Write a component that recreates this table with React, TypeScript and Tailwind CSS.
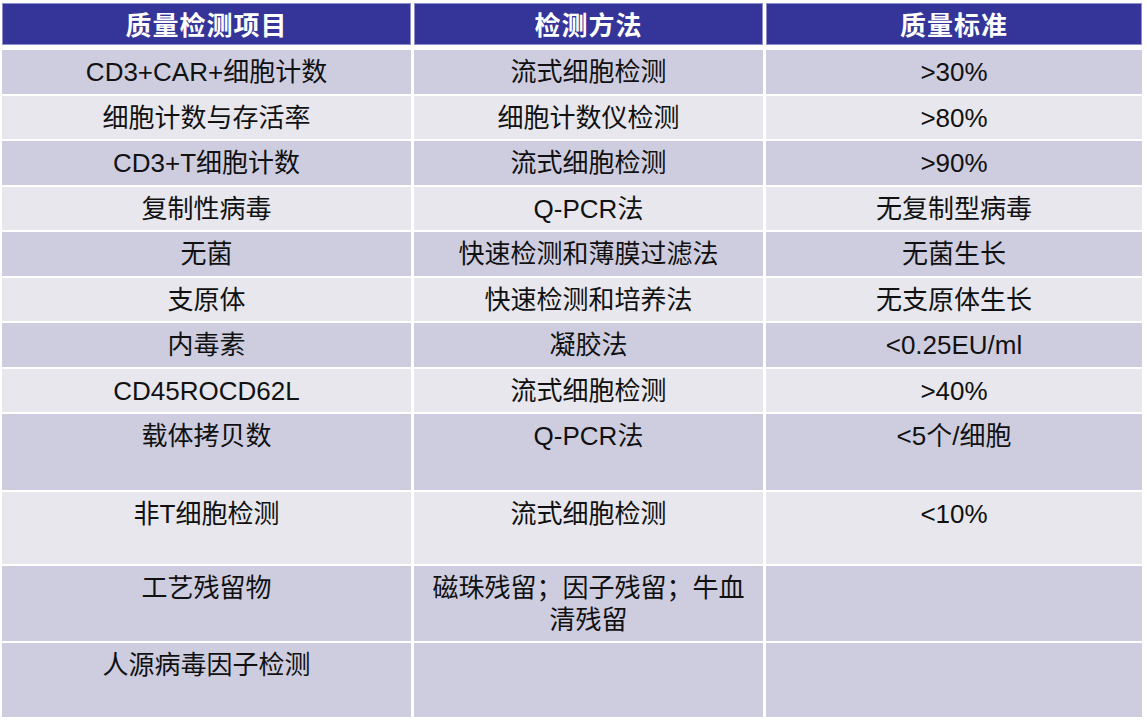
const rows: { item: string; method: string; standard: string; h: string; bg: string }[] = [
  { item: 'CD3+CAR+细胞计数', method: '流式细胞检测', standard: '>30%', h: 'h-[43.5px]', bg: 'bg-[#cecde0]' },
  { item: '细胞计数与存活率', method: '细胞计数仪检测', standard: '>80%', h: 'h-[43.5px]', bg: 'bg-[#e7e7ed]' },
  { item: 'CD3+T细胞计数', method: '流式细胞检测', standard: '>90%', h: 'h-[43.5px]', bg: 'bg-[#cecde0]' },
  { item: '复制性病毒', method: 'Q-PCR法', standard: '无复制型病毒', h: 'h-[43.5px]', bg: 'bg-[#e7e7ed]' },
  { item: '无菌', method: '快速检测和薄膜过滤法', standard: '无菌生长', h: 'h-[43.5px]', bg: 'bg-[#cecde0]' },
  { item: '支原体', method: '快速检测和培养法', standard: '无支原体生长', h: 'h-[43.5px]', bg: 'bg-[#e7e7ed]' },
  { item: '内毒素', method: '凝胶法', standard: '<0.25EU/ml', h: 'h-[43.5px]', bg: 'bg-[#cecde0]' },
  { item: 'CD45ROCD62L', method: '流式细胞检测', standard: '>40%', h: 'h-[43.5px]', bg: 'bg-[#e7e7ed]' },
  { item: '载体拷贝数', method: 'Q-PCR法', standard: '<5个/细胞', h: 'h-[76px]', bg: 'bg-[#cecde0]' },
  { item: '非T细胞检测', method: '流式细胞检测', standard: '<10%', h: 'h-[72px]', bg: 'bg-[#e7e7ed]' },
  { item: '工艺残留物', method: '磁珠残留；因子残留；牛血清残留', standard: '', h: 'h-[75px]', bg: 'bg-[#cecde0]' },
  { item: '人源病毒因子检测', method: '', standard: '', h: 'h-[74px]', bg: 'bg-[#cecde0]' },
];

const font = { fontFamily: '"Liberation Sans", "Noto Sans CJK SC", sans-serif' };

export default function App() {
  return (
    <div className="w-[1147px] h-[720px] bg-white pl-[2px] pt-[3px]" style={font}>
      {/* header */}
      <div className="grid grid-cols-[409px_349px_376px] gap-x-[3px] mb-[5px]">
        {['质量检测项目', '检测方法', '质量标准'].map((t) => (
          <div
            key={t}
            className="h-[42px] bg-[#343499] border border-[#8e8ecc] flex items-center justify-center pt-[3px] text-white font-bold text-[26px] leading-[30px] tracking-[1px]"
          >
            {t}
          </div>
        ))}
      </div>

      {/* body */}
      <div className="grid grid-cols-[409px_349px_376px] gap-x-[3px] gap-y-[2px]">
        {rows.map((r, i) =>
          [r.item, r.method, r.standard].map((c, j) => (
            <div
              key={`${i}-${j}`}
              className={`${r.h} ${r.bg} px-4 pt-[6px] text-center text-[26px] leading-[32px] text-[#111]`}
            >
              {c}
            </div>
          ))
        )}
      </div>
    </div>
  );
}
